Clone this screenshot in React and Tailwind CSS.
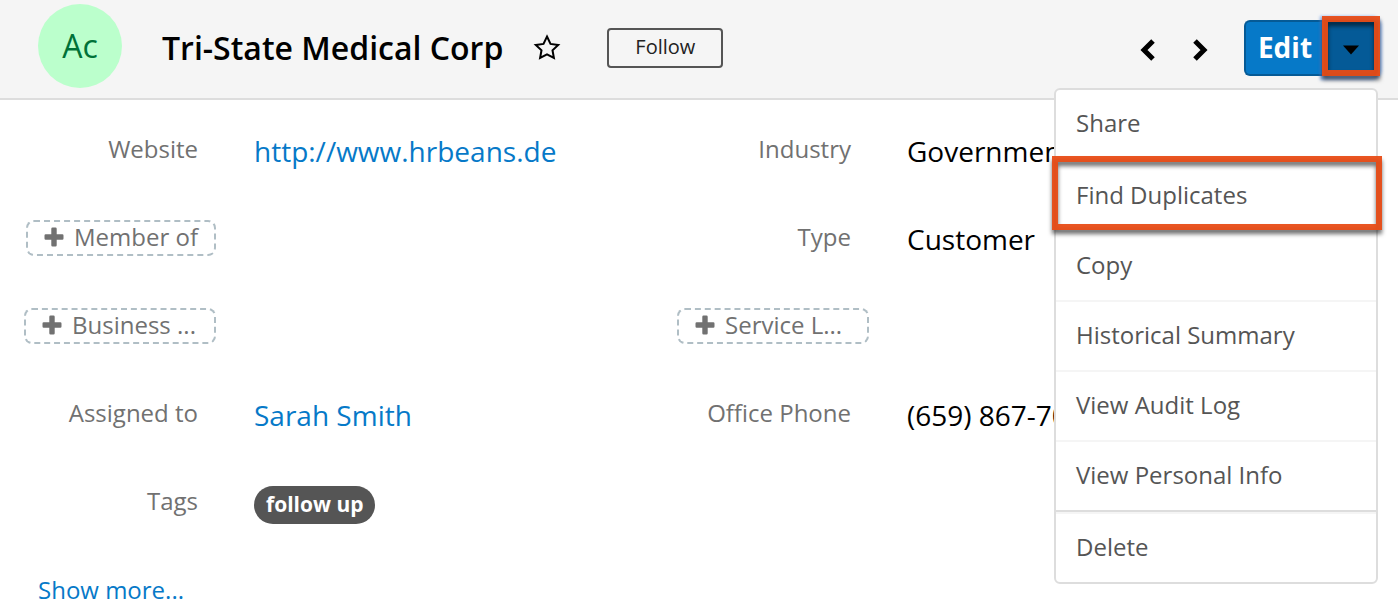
import React, { useState } from "react";

const fields = [
  { label: "Website", value: "http://www.hrbeans.de", href: "#website" },
  { label: "Industry", value: "Government" },
  { label: "Member of", empty: true },
  { label: "Type", value: "Customer" },
  { label: "Business ...", empty: true, full: true },
  { label: "Service L...", empty: true, full: true },
  { label: "Assigned to", value: "Sarah Smith", href: "#sarah-smith" },
  { label: "Office Phone", value: "(659) 867-70" },
  { label: "Tags", tag: "follow up" },
];

const menuGroups = [
  ["Share"],
  [
    "Find Duplicates",
    "Copy",
    "Historical Summary",
    "View Audit Log",
    "View Personal Info",
  ],
  ["Delete"],
];

const PlusIcon = () => (
  <svg className="w-5 h-5 shrink-0" viewBox="0 0 20 20" fill="currentColor">
    <path d="M8.5 0.5h3a1.2 1.2 0 0 1 1.2 1.2v5.6h5.6a1.2 1.2 0 0 1 1.2 1.2v3a1.2 1.2 0 0 1-1.2 1.2h-5.6v5.6a1.2 1.2 0 0 1-1.2 1.2h-3a1.2 1.2 0 0 1-1.2-1.2v-5.6H1.7a1.2 1.2 0 0 1-1.2-1.2v-3a1.2 1.2 0 0 1 1.2-1.2h5.6V1.7a1.2 1.2 0 0 1 1.2-1.2z" />
  </svg>
);

const StarIcon = () => (
  <svg
    className="w-7 h-7"
    viewBox="0 0 28 28"
    fill="none"
    stroke="currentColor"
    strokeWidth="2"
  >
    <path d="M14 2.5l3.5 7.4 7.7 1-5.7 5.4 1.4 7.7L14 20.3l-6.9 3.7 1.4-7.7-5.7-5.4 7.7-1z" />
  </svg>
);

const ChevronIcon = ({ flip }) => (
  <svg
    className={flip ? "w-4 h-6 rotate-180" : "w-4 h-6"}
    viewBox="0 0 16 24"
    fill="none"
    stroke="currentColor"
    strokeWidth="5"
  >
    <path d="M13 3l-9 9 9 9" />
  </svg>
);

// Orange callout frame, sized by its parent
const Highlight = ({ className }) => (
  <span
    className={`absolute pointer-events-none border-6 border-[#e84c16]/95 drop-shadow-[0_4px_2px_rgba(0,0,0,0.6)] ${className}`}
  />
);

const Field = ({ label, value, href, tag, empty, full }) => (
  <div className="flex items-center h-22 text-2xl">
    <div className="w-48 shrink-0 flex justify-end text-[#717171] whitespace-nowrap">
      {empty ? (
        <button
          className={`flex items-center gap-2.5 h-9 px-4 pb-0.5 border-2 border-dashed border-[#b0bec5] rounded-lg ${
            full ? "w-full" : ""
          }`}
        >
          <PlusIcon />
          {label}
        </button>
      ) : (
        <span className="pr-4.5 pb-0.5">{label}</span>
      )}
    </div>
    <div className="pl-9.5 pt-0.5 text-[28px] leading-9 whitespace-nowrap">
      {href && (
        <a href={href} className="text-[#0679c8]">
          {value}
        </a>
      )}
      {!href && value}
      {tag && (
        <span className="flex items-center h-9.5 mt-1 px-3 pb-0.5 rounded-full bg-[#555555] text-white text-[21px] font-bold">
          {tag}
        </span>
      )}
    </div>
  </div>
);

const ActionsMenu = () => (
  <div className="absolute right-0 top-17 z-10 w-81 bg-white border-2 border-[#dddddd] rounded-md text-2xl text-[#555555]">
    {menuGroups.map((group, g) => (
      <div key={group[0]} className={g > 0 ? "border-t-2 border-[#dddddd]" : ""}>
        {group.map((item) => (
          <div key={item} className="relative">
            <button
              className={`block w-full px-5 pb-0.5 text-left ${
                g > 0 ? "h-17.5 border-t-2 border-[#f5f5f5]" : "h-17"
              }`}
            >
              {item}
            </button>
            {item === "Find Duplicates" && (
              <Highlight className="-left-1 -right-1.5 -top-1 bottom-0 z-10" />
            )}
          </div>
        ))}
      </div>
    ))}
  </div>
);

const App = () => {
  const [open, setOpen] = useState(true);

  return (
    <div className="font-['Open_Sans',sans-serif] bg-white text-black">
      {/* Record header */}
      <header className="flex pl-9.5 pr-5 pt-1 pb-1.5 bg-[#f5f5f5] border-b-2 border-[#dddddd]">
        <div className="w-21 h-21 rounded-full bg-[#bbffcc] text-[#007238] text-[32px] flex items-center justify-center">
          Ac
        </div>
        <div className="flex flex-1 items-center h-22 pl-10">
          <h1 className="text-[32px] font-semibold whitespace-nowrap">
            Tri-State Medical Corp
          </h1>
          <button className="ml-7.5" aria-label="Favorite">
            <StarIcon />
          </button>
          <button className="ml-11.5 w-29 h-10 pb-0.5 border-2 border-[#555555] rounded-sm text-xl text-[#222222]">
            Follow
          </button>
          <div className="ml-auto flex items-center gap-9 pt-1">
            <button aria-label="Previous record">
              <ChevronIcon />
            </button>
            <button aria-label="Next record">
              <ChevronIcon flip />
            </button>
          </div>
          <div className="relative flex h-14 ml-9">
            <button className="w-20 pb-0.5 rounded-l-md border-2 border-r-0 border-[#055a96] bg-[#0679c8] text-white text-[28px] leading-9 font-bold">
              Edit
            </button>
            <button
              className="relative w-13.5 flex items-center justify-center bg-[#045a97] rounded-r-md shadow-[0_0_3px_4px_rgba(90,150,240,0.6)]"
              aria-label="More actions"
              aria-expanded={open}
              onClick={() => setOpen(!open)}
            >
              <svg className="w-4 h-2.5 mt-1" viewBox="0 0 16 10">
                <path d="M0 0.5h16L8 9.5z" />
              </svg>
              <Highlight className="-left-0.5 -right-0.5 -top-1 bottom-0" />
            </button>
            {open && <ActionsMenu />}
          </div>
        </div>
      </header>

      {/* Record fields */}
      <main className="pl-6 pr-17 pt-1.5">
        <div className="grid grid-cols-2">
          {fields.map((field) => (
            <Field key={field.label} {...field} />
          ))}
        </div>
        <a
          href="#more"
          className="inline-block ml-3.5 mt-7 text-2xl text-[#0679c8]"
        >
          Show more...
        </a>
      </main>
    </div>
  );
};

export default App;
